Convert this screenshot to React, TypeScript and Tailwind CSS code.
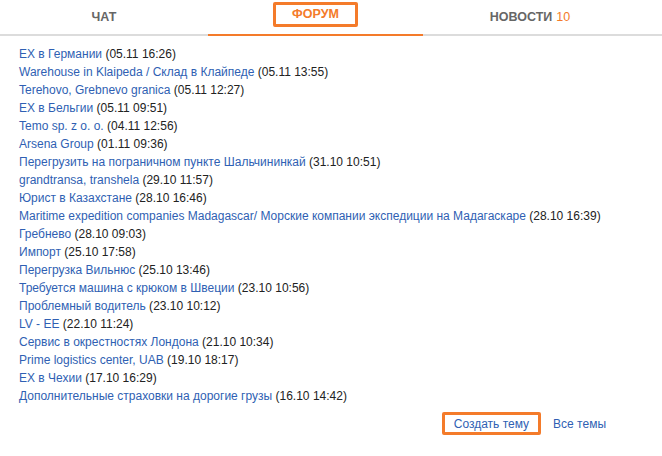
import { useState } from "react";

type Topic = {
    title: string;
    date: string;
};

const topics: Topic[] = [
    { title: "EX в Германии", date: "05.11 16:26" },
    { title: "Warehouse in Klaipeda / Склад в Клайпеде", date: "05.11 13:55" },
    { title: "Terehovo, Grebnevo granica", date: "05.11 12:27" },
    { title: "EX в Бельгии", date: "05.11 09:51" },
    { title: "Temo sp. z o. o.", date: "04.11 12:56" },
    { title: "Arsena Group", date: "01.11 09:36" },
    { title: "Перегрузить на пограничном пункте Шальчининкай", date: "31.10 10:51" },
    { title: "grandtransa, transhela", date: "29.10 11:57" },
    { title: "Юрист в Казахстане", date: "28.10 16:46" },
    { title: "Maritime expedition companies Madagascar/ Морские компании экспедиции на Мадагаскаре", date: "28.10 16:39" },
    { title: "Гребнево", date: "28.10 09:03" },
    { title: "Импорт", date: "25.10 17:58" },
    { title: "Перегрузка Вильнюс", date: "25.10 13:46" },
    { title: "Требуется машина с крюком в Швеции", date: "23.10 10:56" },
    { title: "Проблемный водитель", date: "23.10 10:12" },
    { title: "LV - EE", date: "22.10 11:24" },
    { title: "Сервис в окрестностях Лондона", date: "21.10 10:34" },
    { title: "Prime logistics center, UAB", date: "19.10 18:17" },
    { title: "EX в Чехии", date: "17.10 16:29" },
    { title: "Дополнительные страховки на дорогие грузы", date: "16.10 14:42" },
];

export default function App() {
    const [tab, setTab] = useState("forum");

    return (
        <div className="w-[662px] h-[456px] bg-white font-['Liberation_Sans',Arial,sans-serif] text-[12px] text-[#222]">
            <div className="flex border-b-2 border-[#dcdcdc] h-[36px]">
                <button onClick={() => setTab("chat")} className={`w-[208px] -mb-[2px] border-b-2 flex items-start justify-center pt-[8px] font-bold text-[12.5px] uppercase ${tab === "chat" ? "border-[#f47b2a] text-[#f47b2a]" : "border-transparent text-[#666]"}`}>
                    Чат
                </button>
                <button onClick={() => setTab("forum")} className={`w-[215px] -mb-[2px] border-b-2 flex items-start justify-center pt-[2px] font-bold text-[12.5px] uppercase ${tab === "forum" ? "border-[#f47b2a] text-[#f47b2a]" : "border-transparent text-[#666]"}`}>
                    <span className="border-[3px] border-[#f47b2a] rounded-[2px] w-[85px] h-[25px] flex items-center justify-center">Форум</span>
                </button>
                <button onClick={() => setTab("news")} className={`w-[214px] -mb-[2px] border-b-2 flex items-start justify-center pt-[8px] font-bold text-[12.5px] uppercase ${tab === "news" ? "border-[#f47b2a] text-[#f47b2a]" : "border-transparent text-[#666]"}`}>
                    Новости <span className="ml-[4px] font-normal text-[#f47b2a]">10</span>
                </button>
            </div>

            <ul className="pl-[19px] pt-[9px] leading-[18px]">
                {topics.map((t) => (
                    <li key={t.title + t.date}>
                        <a href="#" className="text-[#2f5fb3] hover:underline">{t.title}</a> ({t.date})
                    </li>
                ))}
            </ul>

            <div className="flex items-center justify-end gap-[12px] pr-[56px] mt-[7px]">
                <a href="#" className="border-[3px] border-[#f47b2a] rounded-[2px] px-[9px] h-[23px] flex items-center text-[#2f5fb3]">Создать тему</a>
                <a href="#" className="text-[#2f5fb3]">Все темы</a>
            </div>
        </div>
    );
}
